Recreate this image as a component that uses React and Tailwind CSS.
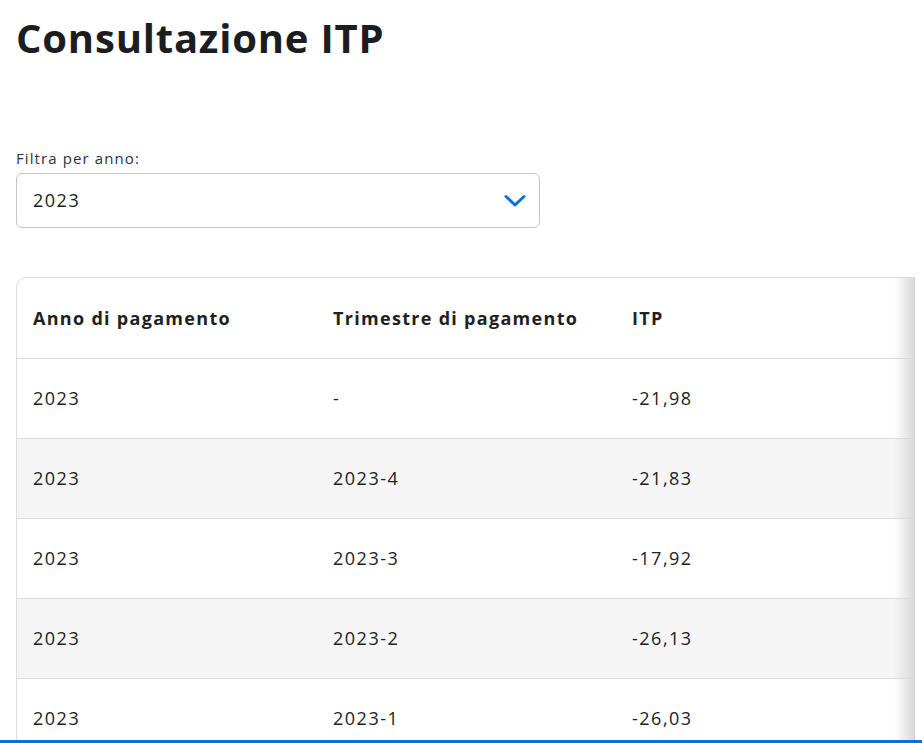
import React from "react";

const rows = [
  ["2023", "-", "-21,98"],
  ["2023", "2023-4", "-21,83"],
  ["2023", "2023-3", "-17,92"],
  ["2023", "2023-2", "-26,13"],
  ["2023", "2023-1", "-26,03"],
];

export default function App() {
  return (
    <div className="w-[922px] h-[743px] overflow-hidden bg-white text-[#1a1a1a] relative" style={{ fontFamily: "'Open Sans', Lato, sans-serif" }}>
      <div className="pl-4">
        <h1 className="pt-[13px] text-[40px] leading-[50px] font-bold tracking-[0.8px] text-[#1b1d21]">Consultazione ITP</h1>
        <div className="mt-[86px] text-[15px] leading-[18px] tracking-[1.1px] text-[#2b3440]">Filtra per anno:</div>
        <div className="mt-[6px] w-[524px] h-[55px] border border-[#c6c6c6] rounded-[6px] flex items-center justify-between pl-[16px] pr-[13px]">
          <span className="text-[18px] tracking-[1.5px] text-[#1d1d1d]">2023</span>
          <svg width="22" height="14" viewBox="0 0 22 14" fill="none">
            <path d="M2 2.5 L11 11 L20 2.5" stroke="#0a6fde" strokeWidth="3" strokeLinecap="round" strokeLinejoin="round" />
          </svg>
        </div>
        <div className="mt-[49px] relative w-[1000px] border border-[#dcdcdc] rounded-[10px]">
          <div className="flex h-[81px] items-center border-b border-[#dcdcdc] text-[18px] font-bold tracking-[1.3px] text-[#1f1f1f]">
            <div className="w-[300px] pl-4">Anno di pagamento</div>
            <div className="w-[299px] pl-4">Trimestre di pagamento</div>
            <div className="pl-4">ITP</div>
          </div>
          {rows.map((r, i) => (
            <div key={i} className={`flex h-[80px] items-center border-b border-[#dcdcdc] text-[18px] tracking-[1.5px] text-[#222] ${i % 2 === 1 ? "bg-[#f5f5f5]" : "bg-white"}`}>
              <div className="w-[300px] pl-4">{r[0]}</div>
              <div className="w-[299px] pl-4">{r[1]}</div>
              <div className="pl-4">{r[2]}</div>
            </div>
          ))}
        </div>
      </div>
      <div className="absolute top-[277px] left-[894px] w-[20px] h-[470px] bg-gradient-to-r from-transparent to-[#d9d9d9]" />
      <div className="absolute top-[277px] left-[914px] w-[8px] h-[470px] bg-white border-l border-[#cfcfcf]" />
      <div className="absolute left-0 bottom-0 w-full h-[3px] bg-[#0a6fde]" />
    </div>
  );
}
